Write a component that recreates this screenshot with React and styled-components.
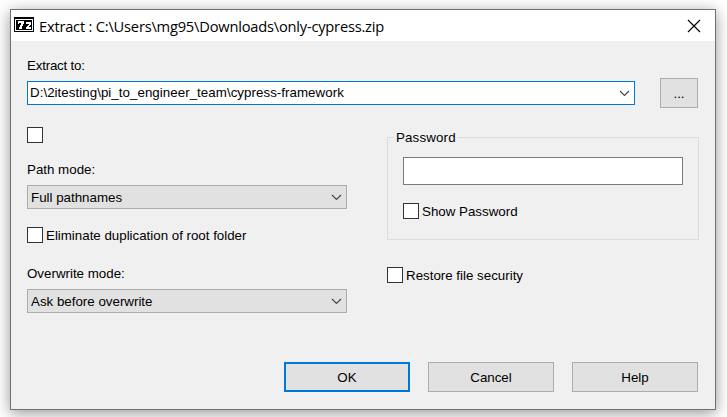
import React from "react";
import styled, { createGlobalStyle } from "styled-components";

const GlobalStyle = createGlobalStyle`
  * { box-sizing: border-box; }
  body { margin: 0; background: #fff; overflow: hidden; }
  button, input { font: inherit; color: inherit; border-radius: 0; margin: 0; }
`;

const Desktop = styled.div`
  width: 727px;
  height: 417px;
  padding: 9px 11px 7px 10px;
  overflow: hidden;
  font: 13.33px/16px "Liberation Sans", Arial, sans-serif;
  color: #000;
`;

const Window = styled.div`
  width: 706px;
  height: 401px;
  border: 1px solid #707070;
  background: #f0f0f0;
  box-shadow: 0 3px 14px rgba(0, 0, 0, 0.42);
`;

const TitleBar = styled.header`
  display: flex;
  align-items: center;
  height: 31px;
  padding: 0 14px 0 3px;
  background: #fff;
`;

const AppIcon = styled.svg`
  flex: none;
  margin-bottom: 2px;
`;

const Title = styled.h1`
  flex: 1;
  margin: 0 0 0 5px;
  font: 400 14.67px/20px "Open Sans", "Noto Sans", sans-serif;
  letter-spacing: -0.21px;
  white-space: pre;
`;

const IconButton = styled.button`
  display: flex;
  padding: 0;
  border: 0;
  background: none;
`;

const Body = styled.main`
  padding: 17px 17px 0 16px;
`;

const Text = styled.span`
  display: block;
  white-space: nowrap;
  letter-spacing: ${(p) => p.$spacing || 0}px;
`;

const DestinationRow = styled.div`
  display: flex;
  align-items: center;
  justify-content: space-between;
  height: 30px;
  margin-top: 4px;
`;

const ComboBox = styled.div`
  display: flex;
  align-items: center;
  justify-content: space-between;
  width: ${(p) => p.$width}px;
  height: 24px;
  padding: 0 4px 0 ${(p) => (p.$editable ? 2 : 3)}px;
  border: 1px solid ${(p) => (p.$editable ? "#0078d7" : "#adadad")};
  background: ${(p) => (p.$editable ? "#fff" : "#e1e1e1")};

  ${Text} {
    padding-top: ${(p) => (p.$editable ? 0 : 2)}px;
  }
`;

const Button = styled.button`
  width: ${(p) => p.$width || 126}px;
  height: 30px;
  padding: 2px 0 0;
  border: ${(p) => (p.$primary ? "2px solid #0078d7" : "1px solid #adadad")};
  background: #e1e1e1;
`;

const Columns = styled.div`
  display: grid;
  grid-template-columns: 320px 312px;
  column-gap: 40px;
  height: 254px;
  padding-top: 19px;
`;

const Options = styled.section`
  display: flex;
  flex-direction: column;
`;

const Field = styled.div`
  display: flex;
  flex-direction: column;
  gap: 7px;
  margin-top: ${(p) => p.$top}px;
`;

const CheckRow = styled.label`
  display: flex;
  align-items: center;
  gap: 3px;
  height: 16px;
  margin-top: ${(p) => p.$top || 0}px;

  ${Text} {
    padding-top: 2px;
  }
`;

const CheckBox = styled.input.attrs({ type: "checkbox" })`
  appearance: none;
  flex: none;
  width: 16px;
  height: 16px;
  border: 1px solid #333;
  background: #fff;
`;

const Group = styled.fieldset`
  min-width: 0;
  height: 110px;
  margin: 3px 0 0;
  padding: 13px 15px 0;
  border: 1px solid #dcdcdc;
`;

const Legend = styled.legend`
  height: 14px;
  margin-left: -9px;
  padding: 0 2px;
  letter-spacing: 0.15px;
`;

const PasswordInput = styled.input`
  display: block;
  width: 280px;
  height: 28px;
  border: 1px solid #7a7a7a;
  background: #fff;
  outline: 0;
`;

const Actions = styled.footer`
  display: flex;
  justify-content: flex-end;
  gap: 18px;
`;

const SevenZipIcon = () => (
  <AppIcon width="20" height="15" viewBox="0 0 20 15" shapeRendering="crispEdges">
    <path d="M0 0h20v15H0z" fill="#000" />
    <path d="M1 2h18v12H1z" fill="#fff" />
    <path d="M2 3h16v10H2z" fill="#000" />
    <path d="M4 4h6v3H9v2H8v3H5v-2h1V8h1V6H5v1H4z" fill="#fff" />
    <path d="M12 5h5v3h-1v1h-1v1h2v2h-5v-2h1V9h1V8h1V7h-3z" fill="#fff" />
  </AppIcon>
);

const CloseIcon = () => (
  <svg width="14" height="14" viewBox="0 0 14 14">
    <path d="M1 1l12 12M13 1L1 13" stroke="#000" strokeWidth="1.2" />
  </svg>
);

const Chevron = () => (
  <svg width="11" height="7" viewBox="0 0 11 7">
    <path d="M1 1l4.5 4.5L10 1" fill="none" stroke="#444" strokeWidth="1.15" />
  </svg>
);

export default function App() {
  return (
    <>
      <GlobalStyle />
      <Desktop>
        <Window>
          <TitleBar>
            <SevenZipIcon />
            <Title>Extract : C:\Users\mg95\Downloads\only-cypress.zip</Title>
            <IconButton aria-label="Close"><CloseIcon /></IconButton>
          </TitleBar>
          <Body>
            <Text $spacing={-0.2}>Extract to:</Text>
            <DestinationRow>
              <ComboBox $width={608} $editable>
                <Text $spacing={0.04}>D:\2itesting\pi_to_engineer_team\cypress-framework</Text>
                <Chevron />
              </ComboBox>
              <Button $width={38}>...</Button>
            </DestinationRow>
            <Columns>
              <Options>
                <CheckRow><CheckBox /></CheckRow>
                <Field $top={19}>
                  <Text>Path mode:</Text>
                  <ComboBox $width={320}><Text>Full pathnames</Text><Chevron /></ComboBox>
                </Field>
                <CheckRow $top={18}><CheckBox /><Text $spacing={-0.01}>Eliminate duplication of root folder</Text></CheckRow>
                <Field $top={23}>
                  <Text>Overwrite mode:</Text>
                  <ComboBox $width={320}><Text>Ask before overwrite</Text><Chevron /></ComboBox>
                </Field>
              </Options>
              <Options>
                <Group>
                  <Legend>Password</Legend>
                  <PasswordInput />
                  <CheckRow $top={18}><CheckBox /><Text>Show Password</Text></CheckRow>
                </Group>
                <CheckRow $top={27}><CheckBox /><Text>Restore file security</Text></CheckRow>
              </Options>
            </Columns>
            <Actions>
              <Button $primary>OK</Button>
              <Button>Cancel</Button>
              <Button>Help</Button>
            </Actions>
          </Body>
        </Window>
      </Desktop>
    </>
  );
}
